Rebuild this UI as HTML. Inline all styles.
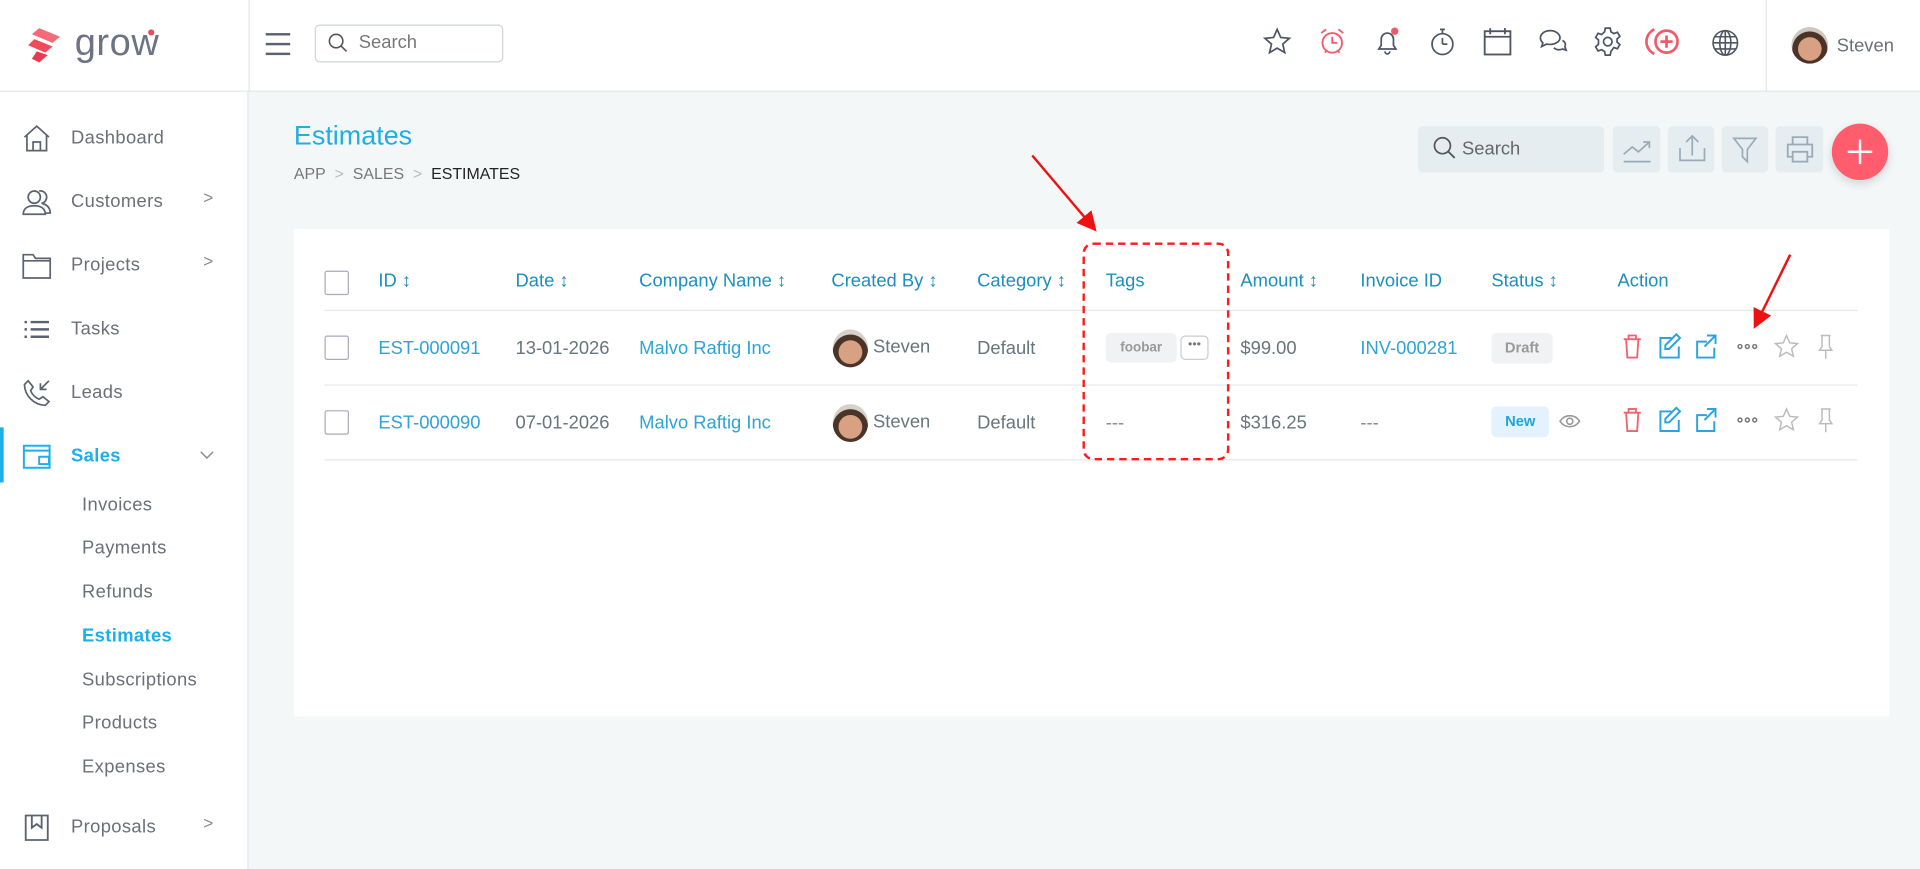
<!DOCTYPE html>
<html><head><meta charset="utf-8"><style>
html,body{margin:0;padding:0;width:1920px;height:869px;overflow:hidden;background:#f4f7f8;}
#w{position:absolute;left:0;top:0;width:1568px;height:710px;transform:scale(1.22449);transform-origin:0 0;font-family:"Liberation Sans",sans-serif;color:#67757c;background:#f4f7f8;}
.a{position:absolute}
.hdr{left:0;top:0;width:1568px;height:75px;background:#fff;border-bottom:1px solid #e3e6e8;box-sizing:border-box}
.side{left:0;top:75px;width:203px;height:635px;background:#fff;border-right:1px solid #e3e6e8;box-sizing:border-box}
.mi{position:absolute;left:58px;font-size:15px;color:#6b6f7a;letter-spacing:.3px}
.si{position:absolute;left:67px;font-size:15px;color:#6b6f7a;letter-spacing:.3px}
.ic{position:absolute;left:18px;width:24px;height:24px}
.chev{position:absolute;left:166px;font-size:14px;color:#888}
svg{overflow:visible}
.th{position:absolute;top:221px;font-size:15px;color:#1c8fbd}
.td{position:absolute;font-size:15px;color:#67757c}
.lk{color:#2fa3d6}
.cb{position:absolute;left:265px;width:18px;height:18px;border:1px solid #aab;border-radius:2px;background:#fff}
.line{position:absolute;left:265px;width:1252px;height:1px;background:#e5e8ea}
.tb{position:absolute;top:103px;height:38px;background:#e6edf1;border-radius:4px}
</style></head><body><div id="w">
<div class="a hdr"></div>
<div class="a side"></div>
<div class="a" style="left:203px;top:0;width:1px;height:75px;background:#e3e6e8"></div>
<!-- logo -->
<svg class="a" style="left:22px;top:22px" width="30" height="30" viewBox="0 0 30 30">
<path d="M10 1 L27 8 L21 13 L4 6 Z" fill="#f36b78"/><path d="M6 10 L21 16 L15 21 L1 15 Z" fill="#f04a5b"/><path d="M8 20 L17 23 L10 29 L4 26 Z" fill="#e83a4e"/></svg>
<div class="a" style="left:61px;top:17px;font-size:31px;color:#6c7385;letter-spacing:.5px">grow</div>
<div class="a" style="left:121px;top:24px;width:5px;height:5px;border-radius:50%;background:#e84a5f"></div>
<!-- hamburger -->
<div class="a" style="left:217px;top:27px;width:20px;height:2px;background:#5c6370;box-shadow:0 8px 0 #5c6370,0 16px 0 #5c6370"></div>
<div class="a" style="left:257px;top:20px;width:152px;height:29px;border:1px solid #cfd4d8;border-radius:4px;background:#fff"></div>
<svg class="a" style="left:268px;top:27px" width="16" height="16"><circle cx="6.5" cy="6.5" r="5.5" fill="none" stroke="#555" stroke-width="1.3"/><line x1="10.5" y1="10.5" x2="15" y2="15" stroke="#555" stroke-width="1.3"/></svg>
<div class="a" style="left:293px;top:26px;font-size:15px;color:#777">Search</div>
<!-- header icons -->
<svg class="a" style="left:1031px;top:22px" width="24" height="24" viewBox="0 0 24 24" fill="none" stroke="#4e5563" stroke-width="1.4"><path d="M12 2 L14.9 8.6 22 9.3 16.6 14 18.2 21 12 17.3 5.8 21 7.4 14 2 9.3 9.1 8.6Z"/></svg>
<svg class="a" style="left:1076px;top:22px" width="24" height="24" viewBox="0 0 24 24" fill="none" stroke="#f15a6b" stroke-width="1.5"><circle cx="12" cy="13" r="8"/><path d="M12 8v5h4M3 5l4-3M21 5l-4-3M6 21l2-2M18 21l-2-2"/></svg>
<svg class="a" style="left:1121px;top:22px" width="24" height="24" viewBox="0 0 24 24" fill="none" stroke="#4e5563" stroke-width="1.4"><path d="M5 18h14l-2-3V10a5 5 0 0 0-10 0v5z M10 20a2 2 0 0 0 4 0"/><circle cx="18" cy="3.5" r="3" fill="#f15a6b" stroke="none"/></svg>
<svg class="a" style="left:1166px;top:22px" width="24" height="24" viewBox="0 0 24 24" fill="none" stroke="#4e5563" stroke-width="1.4"><circle cx="12" cy="14" r="8.5"/><path d="M12 14V9M12 14h4M10 2h4M12 2v3"/></svg>
<svg class="a" style="left:1211px;top:22px" width="24" height="24" viewBox="0 0 24 24" fill="none" stroke="#4e5563" stroke-width="1.5"><rect x="1.5" y="3.5" width="21" height="19"/><path d="M1.5 8h21M6 1v5M18 1v5"/></svg>
<svg class="a" style="left:1256px;top:22px" width="24" height="24" viewBox="0 0 24 24" fill="none" stroke="#4e5563" stroke-width="1.4"><path d="M10 3c-5 0-8 3-8 6 0 2 1 3 2 4l-1 3 4-2c1 .3 2 .3 3 .3 5 0 8-3 8-5.5S15 3 10 3z"/><path d="M20 11c2 1 3 3 2 5l1 3-3-1c-2 1-5 1-7-1"/></svg>
<svg class="a" style="left:1301px;top:22px" width="24" height="24" viewBox="0 0 24 24" fill="none" stroke="#4e5563" stroke-width="1.4"><circle cx="12" cy="12" r="3.5"/><path d="M10 1h4l.6 3 2.4 1.4 2.9-1 2 3.4-2.3 2 0 2.6 2.3 2-2 3.4-2.9-1L14.6 20l-.6 3h-4l-.6-3L7 18.6l-2.9 1-2-3.4 2.3-2V10.6L2.1 8.6l2-3.4 2.9 1L9.4 4z"/></svg>
<svg class="a" style="left:1345px;top:22px" width="28" height="24" viewBox="0 0 28 24" fill="none" stroke="#f15a6b" stroke-width="2.2"><path d="M6 2A11 11 0 0 0 6 22"/><circle cx="16" cy="12" r="9"/><path d="M16 7v10M11 12h10"/></svg>
<svg class="a" style="left:1397px;top:23px" width="24" height="24" viewBox="0 0 24 24" fill="none" stroke="#4e5563" stroke-width="1.3"><circle cx="12" cy="12" r="10"/><ellipse cx="12" cy="12" rx="4.5" ry="10"/><path d="M2 12h20M3.5 7h17M3.5 17h17M12 2v20"/></svg>
<div class="a" style="left:1442px;top:0;width:1px;height:75px;background:#e3e6e8"></div>
<div class="a" style="left:1463px;top:22px;width:30px;height:30px;border-radius:50%;background:radial-gradient(circle at 50% 60%,#d9a184 0 40%,#4a3428 42% 60%,#cfc8c0 62%)"></div>
<div class="a" style="left:1500px;top:29px;font-size:15px;color:#6b6f7a">Steven</div>
<!-- sidebar -->
<svg class="ic" style="top:101px" viewBox="0 0 24 24" fill="none" stroke="#5c6370" stroke-width="1.4"><path d="M2 11L12 2l10 9M4 9v13h16V9M9 22v-7h6v7"/></svg><div class="mi" style="top:104px">Dashboard</div>
<svg class="ic" style="top:153px" viewBox="0 0 24 24" fill="none" stroke="#5c6370" stroke-width="1.4"><circle cx="10" cy="8" r="5"/><path d="M1 22c0-5 4-7 9-7s9 2 9 7zM14 3a5 5 0 0 1 2 10c4 1 7 3 7 8h-4"/></svg><div class="mi" style="top:156px">Customers</div><div class="chev" style="top:153px">&gt;</div>
<svg class="ic" style="top:205px" viewBox="0 0 24 24" fill="none" stroke="#5c6370" stroke-width="1.4"><path d="M1 3h8l2 3h12v16H1zM1 8h22"/></svg><div class="mi" style="top:208px">Projects</div><div class="chev" style="top:205px">&gt;</div>
<svg class="ic" style="top:257px" viewBox="0 0 24 24" stroke="#5c6370" stroke-width="2"><path d="M2 6h2M2 12h2M2 18h2M7 6h15M7 12h15M7 18h15"/></svg><div class="mi" style="top:260px">Tasks</div>
<svg class="ic" style="top:309px" viewBox="0 0 24 24" fill="none" stroke="#5c6370" stroke-width="1.4"><path d="M5 2l4 5-2 3c1 3 4 6 7 7l3-2 5 4-3 3C10 22 2 14 2 5zM22 2l-7 7M15 4v5h5"/></svg><div class="mi" style="top:312px">Leads</div>
<div class="a" style="left:0;top:349px;width:3px;height:45px;background:#1eaee8"></div>
<svg class="ic" style="top:361px" viewBox="0 0 24 24" fill="none" stroke="#1eaee8" stroke-width="1.6"><rect x="1.5" y="3" width="21" height="18"/><path d="M1.5 7h21M14 12h8v6h-8z"/></svg><div class="mi" style="top:364px;color:#1eaee8;font-weight:bold">Sales</div>
<svg class="a" style="left:163px;top:368px" width="12" height="8"><path d="M1 1l5 5 5-5" fill="none" stroke="#888" stroke-width="1.2"/></svg>
<div class="si" style="top:404px">Invoices</div>
<div class="si" style="top:439px">Payments</div>
<div class="si" style="top:475px">Refunds</div>
<div class="si" style="top:511px;color:#1eaee8;font-weight:bold">Estimates</div>
<div class="si" style="top:547px">Subscriptions</div>
<div class="si" style="top:582px">Products</div>
<div class="si" style="top:618px">Expenses</div>
<svg class="ic" style="top:664px" viewBox="0 0 24 24" fill="none" stroke="#5c6370" stroke-width="1.5"><path d="M3 2h18v20H3zM8 2v10l4-3 4 3V2"/></svg><div class="mi" style="top:667px">Proposals</div><div class="chev" style="top:664px">&gt;</div>
<!-- title -->
<div class="a" style="left:240px;top:98px;font-size:22px;color:#20aee3">Estimates</div>
<div class="a" style="left:240px;top:134px;font-size:13px;color:#777">APP&nbsp;&nbsp;<span style="color:#bbb">&gt;</span>&nbsp;&nbsp;SALES&nbsp;&nbsp;<span style="color:#bbb">&gt;</span>&nbsp;&nbsp;<span style="color:#222">ESTIMATES</span></div>
<!-- toolbar -->
<div class="tb" style="left:1158px;width:152px"></div>
<svg class="a" style="left:1170px;top:111px" width="20" height="20"><circle cx="8" cy="8" r="6.5" fill="none" stroke="#555" stroke-width="1.4"/><line x1="12.5" y1="12.5" x2="18" y2="18" stroke="#555" stroke-width="1.5"/></svg>
<div class="a" style="left:1194px;top:113px;font-size:15px;color:#666">Search</div>
<div class="tb" style="left:1317px;width:39px"></div>
<svg class="a" style="left:1325px;top:110px" width="24" height="24" fill="none" stroke="#9aabb8" stroke-width="1.4"><path d="M1 16l7-6 5 4 9-8M17 6h5v5M1 22h22"/></svg>
<div class="tb" style="left:1362px;width:38px"></div>
<svg class="a" style="left:1370px;top:109px" width="24" height="24" fill="none" stroke="#9aabb8" stroke-width="1.4"><path d="M12 18V2M7 7l5-5 5 5M2 12v10h20V12"/></svg>
<div class="tb" style="left:1406px;width:38px"></div>
<svg class="a" style="left:1414px;top:111px" width="22" height="22" fill="none" stroke="#9aabb8" stroke-width="1.4"><path d="M2 2h18l-7 9v10l-4-4v-6z"/></svg>
<div class="tb" style="left:1450px;width:39px"></div>
<svg class="a" style="left:1458px;top:110px" width="24" height="24" fill="none" stroke="#9aabb8" stroke-width="1.5"><path d="M6 8V2h12v6M6 18H2V8h20v10h-4M6 14h12v8H6z"/></svg>
<div class="a" style="left:1496px;top:101px;width:46px;height:46px;border-radius:50%;background:#ff5c6e;box-shadow:0 3px 8px rgba(0,0,0,.15)"></div>
<div class="a" style="left:1509px;top:123px;width:20px;height:2px;background:#fff"></div>
<div class="a" style="left:1518px;top:114px;width:2px;height:20px;background:#fff"></div>
<!-- card -->
<div class="a" style="left:240px;top:187px;width:1303px;height:398px;background:#fff"></div>
<div class="cb" style="top:221px"></div>
<div class="th" style="left:309px">ID ↕</div>
<div class="th" style="left:421px">Date ↕</div>
<div class="th" style="left:522px">Company Name ↕</div>
<div class="th" style="left:679px">Created By ↕</div>
<div class="th" style="left:798px">Category ↕</div>
<div class="th" style="left:903px">Tags</div>
<div class="th" style="left:1013px">Amount ↕</div>
<div class="th" style="left:1111px">Invoice ID</div>
<div class="th" style="left:1218px">Status ↕</div>
<div class="th" style="left:1321px">Action</div>
<div class="line" style="top:253px"></div>
<div class="line" style="top:314px"></div>
<div class="line" style="top:375px"></div>
<!-- rows -->
<div class="cb" style="top:274px"></div>
<div class="td lk" style="left:309px;top:276px">EST-000091</div>
<div class="td" style="left:421px;top:276px">13-01-2026</div>
<div class="td lk" style="left:522px;top:276px">Malvo Raftig Inc</div>
<div class="a" style="left:680px;top:269px;width:29px;height:31px;border-radius:50%;background:radial-gradient(circle at 50% 60%,#d9a184 0 40%,#4a3428 42% 60%,#d6d0c8 62%)"></div>
<div class="td" style="left:713px;top:275px">Steven</div>
<div class="td" style="left:798px;top:276px">Default</div>
<div class="a" style="left:903px;top:272px;width:58px;height:24px;background:#f1f2f3;border-radius:4px;font-size:11px;font-weight:bold;color:#999;text-align:center;line-height:24px">foobar</div>
<div class="a" style="left:964px;top:274px;width:21px;height:18px;border:1px solid #c8cdd0;border-radius:4px;font-size:10px;color:#777;text-align:center;line-height:14px">•••</div>
<div class="td" style="left:1013px;top:276px">$99.00</div>
<div class="td lk" style="left:1111px;top:276px">INV-000281</div>
<div class="a" style="left:1218px;top:272px;width:50px;height:25px;background:#f1f2f3;border-radius:4px;font-size:12px;font-weight:bold;color:#999;text-align:center;line-height:25px">Draft</div>

<div class="cb" style="top:335px"></div>
<div class="td lk" style="left:309px;top:337px">EST-000090</div>
<div class="td" style="left:421px;top:337px">07-01-2026</div>
<div class="td lk" style="left:522px;top:337px">Malvo Raftig Inc</div>
<div class="a" style="left:680px;top:330px;width:29px;height:31px;border-radius:50%;background:radial-gradient(circle at 50% 60%,#d9a184 0 40%,#4a3428 42% 60%,#d6d0c8 62%)"></div>
<div class="td" style="left:713px;top:336px">Steven</div>
<div class="td" style="left:798px;top:337px">Default</div>
<div class="td" style="left:903px;top:337px;color:#888">---</div>
<div class="td" style="left:1013px;top:337px">$316.25</div>
<div class="td" style="left:1111px;top:337px;color:#888">---</div>
<div class="a" style="left:1218px;top:332px;width:47px;height:25px;background:#e3f2fd;border-radius:4px;font-size:12px;font-weight:bold;color:#1ea5e0;text-align:center;line-height:25px">New</div>
<svg class="a" style="left:1273px;top:338px" width="18" height="12" fill="none" stroke="#999" stroke-width="1.3"><path d="M1 6c4-6 12-6 16 0-4 6-12 6-16 0z"/><circle cx="9" cy="6" r="2.5"/></svg>
<!-- action icons rows -->
<svg class="a" style="left:1324px;top:272px" width="200" height="100">
<g id="ac">
<g fill="none" stroke="#f5606f" stroke-width="1.5"><path d="M2 5h14M6 5V2h6v3M4 5l1 15h8l1-15"/></g>
<g fill="none" stroke="#2ba3dd" stroke-width="1.6"><path d="M41 4h-9v16h15v-9"/><path d="M45 1l3 3-9 9h-3v-3z"/></g>
<g fill="none" stroke="#2ba3dd" stroke-width="1.6"><path d="M70 7h-8v13h14v-8M70 2h7v7M77 2l-9 9"/></g>
<g fill="none" stroke="#777" stroke-width="1.2"><circle cx="97" cy="11" r="1.6"/><circle cx="103" cy="11" r="1.6"/><circle cx="109" cy="11" r="1.6"/></g>
<path d="M135 2l2.6 6 6.4.6-4.8 4.2 1.4 6.2-5.6-3.3-5.6 3.3 1.4-6.2-4.8-4.2 6.4-.6z" fill="none" stroke="#bbb" stroke-width="1.2"/>
<path d="M163 2h8M164 2v9l-2 3h10l-2-3V2M167 14v7" fill="none" stroke="#bbb" stroke-width="1.2"/>
</g>
<use href="#ac" y="60"/>
</svg>
<!-- annotations -->
<div class="a" style="left:884px;top:198px;width:116px;height:174px;border:2px dashed #ff1b1b;border-radius:9px"></div>
<svg class="a" style="left:0;top:0" width="1568" height="710">
<defs><marker id="m" markerWidth="8" markerHeight="8" refX="6" refY="4" orient="auto"><path d="M0 0L8 4 0 8z" fill="#e11"/></marker></defs>
<line x1="843" y1="127" x2="893" y2="186" stroke="#e11" stroke-width="2" marker-end="url(#m)"/>
<line x1="1462" y1="208" x2="1434" y2="265" stroke="#e11" stroke-width="2" marker-end="url(#m)"/>
</svg>
</div></body></html>
